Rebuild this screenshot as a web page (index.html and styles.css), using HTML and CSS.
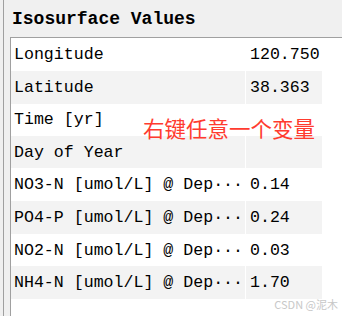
FILE: index.html
```html
<!DOCTYPE html>
<html>
<head>
    <title>Isosurface Values</title>
    <link rel="stylesheet" href="styles.css">
</head>
<body>
    <div class="panel">
        <h2 class="title">Isosurface Values</h2>

        <div class="grid">
            <div class="row"><div class="name">Longitude</div><div class="value">120.750</div></div>
            <div class="row alt"><div class="name">Latitude</div><div class="value">38.363</div></div>
            <div class="row"><div class="name">Time [yr]</div><div class="value"></div></div>
            <div class="row alt"><div class="name">Day of Year</div><div class="value"></div></div>
            <div class="row"><div class="name">NO3-N [umol/L] @ Dep&middot;&middot;&middot;</div><div class="value">0.14</div></div>
            <div class="row alt"><div class="name">PO4-P [umol/L] @ Dep&middot;&middot;&middot;</div><div class="value">0.24</div></div>
            <div class="row"><div class="name">NO2-N [umol/L] @ Dep&middot;&middot;&middot;</div><div class="value">0.03</div></div>
            <div class="row alt"><div class="name">NH4-N [umol/L] @ Dep&middot;&middot;&middot;</div><div class="value">1.70</div></div>

            <!-- annotation drawn on top of the screenshot -->
            <div class="note">右键任意一个变量</div>
        </div>
    </div>

    <div class="mark">CSDN @泥木</div>
</body>
</html>
```

FILE: styles.css
```css
body {
    margin: 0;
    background-color: #f0f0f0;
    font-family: "Liberation Mono", monospace;
    color: #000;
    height: 316px;
    overflow: hidden;
    position: relative;
}

.panel {
    margin-left: 3px;
    border-left: 1px solid #a0a0a0;
    height: 316px;
    padding-left: 6px;
}

.title {
    margin: 0;
    height: 37px;
    padding-left: 2px;
    font-size: 18px;
    font-weight: bold;
    line-height: 38px;
}

.grid {
    position: relative;
    background-color: #fff;
    border-top: 1px solid #a0a0a0;
    border-left: 1px solid #a0a0a0;
    height: 279px;
}

.row {
    display: grid;
    grid-template-columns: 234px 76px;
    column-gap: 1px;
    height: 32.6px;
    font-size: 16.6px;
    line-height: 33px;
}

.row.alt .name,
.row.alt .value {
    background-color: #f3f3f3;
}

.name {
    padding-left: 3px;
    white-space: nowrap;
    overflow: hidden;
}

.value {
    padding-left: 4px;
}

.note {
    position: absolute;
    left: 132px;
    top: 78px;
    font-family: "Noto Sans CJK SC", sans-serif;
    font-size: 21.5px;
    color: #ff3b2f;
    line-height: 24px;
}

.mark {
    position: absolute;
    right: 4px;
    bottom: 4px;
    font-family: "Noto Sans CJK SC", sans-serif;
    font-size: 11px;
    color: #c8c8c8;
}
```
